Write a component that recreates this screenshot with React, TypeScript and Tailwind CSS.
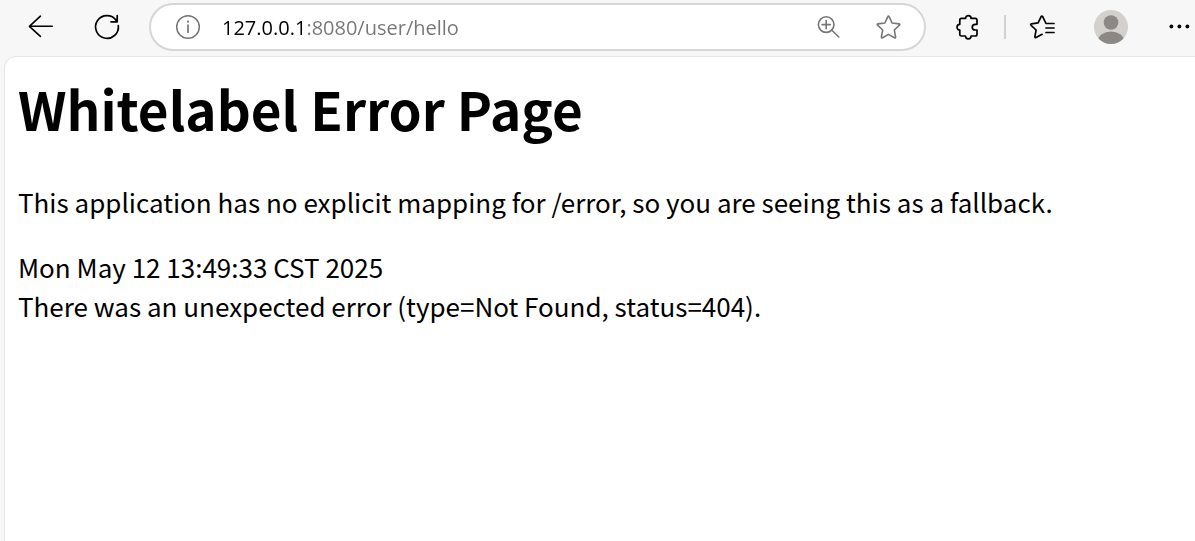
import { useState } from 'react';

const line = {
  fill: 'none',
  stroke: 'currentColor',
  strokeLinecap: 'round',
  strokeLinejoin: 'round',
} as const;

function BackIcon() {
  return (
    <svg className="size-7" viewBox="0 0 28 28" strokeWidth="1.6" {...line} aria-hidden="true">
      <path d="M25.3 13.3H2.4M13.4 3.2L2.4 13.3L13.4 23.4" />
    </svg>
  );
}

function ReloadIcon() {
  return (
    <svg className="size-7" viewBox="0 0 28 28" strokeWidth="1.7" {...line} aria-hidden="true">
      <path d="M25.3 12.6A11.4 11.4 0 1 1 23.3 7.4M24.2 2.6V8.8H18" />
    </svg>
  );
}

function InfoIcon() {
  return (
    <svg className="size-7" viewBox="0 0 28 28" strokeWidth="1.5" {...line} aria-hidden="true">
      <circle cx="14" cy="14" r="11.3" />
      <path d="M14 12V19.2" strokeWidth="1.7" />
      <circle cx="14" cy="8.7" r="1.1" fill="currentColor" stroke="none" />
    </svg>
  );
}

function ZoomIcon() {
  return (
    <svg className="size-7" viewBox="0 0 28 28" strokeWidth="1.6" {...line} aria-hidden="true">
      <circle cx="12.2" cy="11.6" r="7.8" />
      <path d="M17.9 17.2L24.8 24M12.2 7.5V15.7M8.1 11.6H16.3" />
    </svg>
  );
}

function StarIcon() {
  return (
    <svg className="size-7" viewBox="0 0 28 28" strokeWidth="1.6" {...line} aria-hidden="true">
      <path d="M13.7 3.8Q14.5 2.4 15.3 3.8L18.1 10L25.1 10.9Q26.4 11.2 25.4 12.2L20.3 17L21.6 23.8Q21.7 25.3 20.4 24.7L14.5 21.4L8.6 24.7Q7.3 25.3 7.4 23.8L8.7 17L3.6 12.2Q2.6 11.2 3.9 10.9L10.9 10Z" />
    </svg>
  );
}

function PuzzleIcon() {
  return (
    <svg className="size-7" viewBox="0 0 28 28" strokeWidth="1.7" {...line} aria-hidden="true">
      <path d="M7.4 5.4H11.5C11.5 1.7 17.1 1.7 17.1 5.4H21.2Q23 5.4 23 7.2V11.3H21.4C17.2 11.3 17.2 17 21.4 17H23V21.2Q23 23 21.2 23H17.1C17.1 26.7 11.5 26.7 11.5 23H7.4Q5.8 23 5.8 21.2V17C2.1 17 2.1 11.3 5.8 11.3V7.2Q5.8 5.4 7.4 5.4Z" />
    </svg>
  );
}

function FavoritesIcon() {
  return (
    <svg className="size-7" viewBox="0 0 28 28" strokeWidth="1.7" {...line} aria-hidden="true">
      <path d="M25 10.5H17L13.8 3.8Q12.9 2.4 12 3.8L9.1 9.9L2.4 10.9Q1.1 11.2 2.1 12.3L7.1 17L5.9 23.6Q5.8 25.1 7.1 24.5L13.1 21.3M17 15H25M17 19.5H25" />
    </svg>
  );
}

function Avatar() {
  return (
    <svg className="size-9" viewBox="0 0 36 36" aria-hidden="true">
      <clipPath id="avatar-edge">
        <circle cx="18" cy="18" r="17" />
      </clipPath>
      <g clipPath="url(#avatar-edge)">
        <rect width="36" height="36" fill="#d2d1ce" />
        <circle cx="18" cy="13.5" r="7.3" fill="#8b8886" />
        <ellipse cx="18" cy="32" rx="13" ry="9.6" fill="#8b8886" />
      </g>
    </svg>
  );
}

function MoreIcon() {
  return (
    <svg className="size-7" viewBox="0 0 28 28" fill="currentColor" aria-hidden="true">
      <circle cx="6.4" cy="13.5" r="1.9" />
      <circle cx="14.4" cy="13.5" r="1.9" />
      <circle cx="22.4" cy="13.5" r="1.9" />
    </svg>
  );
}

export default function App() {
  const [address, setAddress] = useState('127.0.0.1:8080/user/hello');

  return (
    <div className="flex min-h-screen flex-col overflow-hidden bg-[#f7f7f7] text-black">
      <header className="flex h-14 items-center pt-[3px] pb-[5px] pl-[27px]">
        <button type="button" aria-label="Back"><BackIcon /></button>
        <button type="button" aria-label="Refresh" className="ml-[38px]"><ReloadIcon /></button>
        <div className="ml-7 flex h-12 min-w-0 flex-1 items-center rounded-full border-2 border-[#d6d6d6] bg-white pr-[22px] pl-[23px] text-[#767676]">
          <button type="button" aria-label="View site information"><InfoIcon /></button>
          <input
            type="text"
            aria-label="Address"
            value={address}
            onChange={(event) => setAddress(event.target.value)}
            spellCheck={false}
            className="ml-5 h-8 min-w-0 flex-1 bg-linear-to-r from-black from-[84px] to-[#767676] to-[84px] bg-clip-text font-['Open_Sans','Noto_Sans',sans-serif] text-[20px] text-transparent caret-black outline-none"
          />
          <button type="button" aria-label="Zoom"><ZoomIcon /></button>
          <button type="button" aria-label="Add this page to favorites" className="ml-8"><StarIcon /></button>
        </div>
        <button type="button" aria-label="Extensions" className="ml-7"><PuzzleIcon /></button>
        <span className="ml-[22px] h-6 w-0.5 bg-[#d1d1d1]" />
        <button type="button" aria-label="Favorites" className="ml-[23px]"><FavoritesIcon /></button>
        <button type="button" aria-label="Profile" className="ml-9"><Avatar /></button>
        <button type="button" aria-label="Settings and more" className="mr-[2px] ml-9"><MoreIcon /></button>
      </header>
      <main className="ml-1 flex-1 rounded-tl-xl border-t border-l border-[#e5e5e5] bg-white px-[13px] pt-3 font-['Noto_Sans_CJK_SC',sans-serif] text-[26px] leading-[39px]">
        <h1 className="text-[53px] leading-[78px] font-bold">Whitelabel Error Page</h1>
        <p className="mt-[35px]">This application has no explicit mapping for /error, so you are seeing this as a fallback.</p>
        <div className="mt-[26px]">Mon May 12 13:49:33 CST 2025</div>
        <div>There was an unexpected error (type=Not Found, status=404).</div>
      </main>
    </div>
  );
}
